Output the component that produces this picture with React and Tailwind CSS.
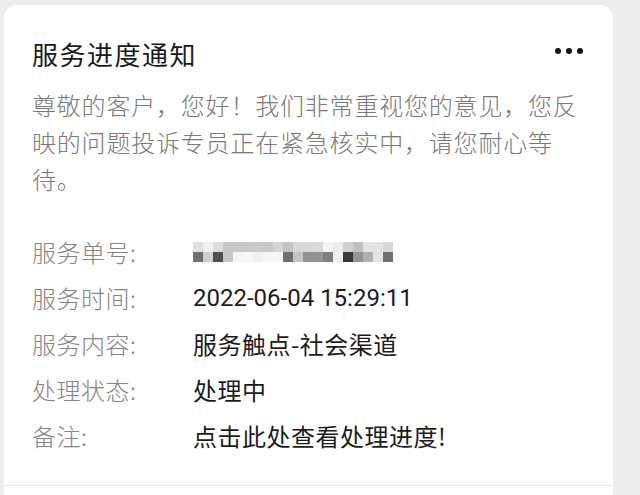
import React from "react";

const topRow = [
  "bg-[#e0e0e0]", "bg-[#f0f0f0]", "bg-[#dcdcdc]", "bg-[#c8c8c8]", "bg-[#c8c8c8]",
  "bg-[#c8c8c8]", "bg-[#cacaca]", "bg-[#c8c8c8]", "bg-[#d4d4d4]", "bg-[#c4c4c4]",
  "bg-[#d8d8d8]", "bg-[#d8d8d8]", "bg-[#dadada]", "bg-[#f4f4f4]", "bg-[#ececec]",
  "bg-[#d0d0d0]", "bg-[#c0c0c0]", "bg-[#e4e4e4]", "bg-[#e4e4e4]", "bg-[#d8d8d8]",
];

const bottomRow = [
  "bg-[#707070]", "bg-[#d0d0d0]", "bg-[#505050]", "bg-[#c8c8c8]", "bg-[#f4f4f4]",
  "bg-[#f8f8f8]", "bg-[#f0f0f0]", "bg-[#f8f8f8]", "bg-[#f8f8f8]", "bg-[#707070]",
  "bg-[#c4c4c4]", "bg-[#949494]", "bg-[#949494]", "bg-[#808080]", "bg-[#f0f0f0]",
  "bg-[#383838]", "bg-[#949494]", "bg-[#b0b0b0]", "bg-[#e4e4e4]", "bg-[#707070]",
];

const rows = [
  { label: "服务时间:", value: "2022-06-04 15:29:11", latin: true },
  { label: "服务内容:", value: "服务触点-社会渠道" },
  { label: "处理状态:", value: "处理中" },
  { label: "备注:", value: "点击此处查看处理进度!" },
];

const Mosaic = () => (
  <div className="flex flex-col">
    <div className="flex">
      {topRow.map((c, i) => (
        <div key={i} className={`w-[10px] h-[10px] ${c}`} />
      ))}
    </div>
    <div className="flex">
      {bottomRow.map((c, i) => (
        <div key={i} className={`w-[10px] h-[10px] ${c}`} />
      ))}
    </div>
  </div>
);

const App = () => {
  return (
    <div
      className="w-[640px] h-[495px] bg-[#ededed] overflow-hidden pt-[5px] pl-[4px]"
      style={{ fontFamily: '"Noto Sans CJK SC", "Noto Sans", sans-serif' }}
    >
      <div className="w-[609px] h-[500px] bg-white rounded-t-[13px] flex flex-col">
        <div className="flex items-center justify-between pl-[28px] pr-[30px] pt-[31px]">
          <h2 className="text-[26px] leading-[36px] tracking-[1.5px] text-[#1a1a1a]">
            服务进度通知
          </h2>
          <div className="flex gap-[5px] -mt-[6px]">
            <span className="w-[6px] h-[6px] rounded-full bg-[#111]" />
            <span className="w-[6px] h-[6px] rounded-full bg-[#111]" />
            <span className="w-[6px] h-[6px] rounded-full bg-[#111]" />
          </div>
        </div>
        <p className="mt-[14px] pl-[28px] pr-[30px] text-[24px] leading-[37px] tracking-[0.8px] font-light text-[#7a7a7a]">
          尊敬的客户，您好！我们非常重视您的意见，您反映的问题投诉专员正在紧急核实中，请您耐心等待。
        </p>
        <div className="mt-[32px] pl-[28px] flex flex-col">
          <div className="flex items-center h-[46px]">
            <span className="w-[161px] text-[24px] tracking-[0.5px] font-light text-[#858585]">
              服务单号:
            </span>
            <Mosaic />
          </div>
          {rows.map((r) => (
            <div key={r.label} className="flex items-center h-[46px]">
              <span className="w-[161px] text-[24px] tracking-[0.5px] font-light text-[#858585]">
                {r.label}
              </span>
              <span
                className={
                  r.latin
                    ? "text-[24px] text-[#1c1c1c] font-[Roboto]"
                    : "text-[24px] tracking-[0.5px] text-[#1c1c1c]"
                }
              >
                {r.value}
              </span>
            </div>
          ))}
        </div>
        <div className="mt-[26px] h-[1px] bg-[#e6e6e6]" />
      </div>
    </div>
  );
};

export default App;
